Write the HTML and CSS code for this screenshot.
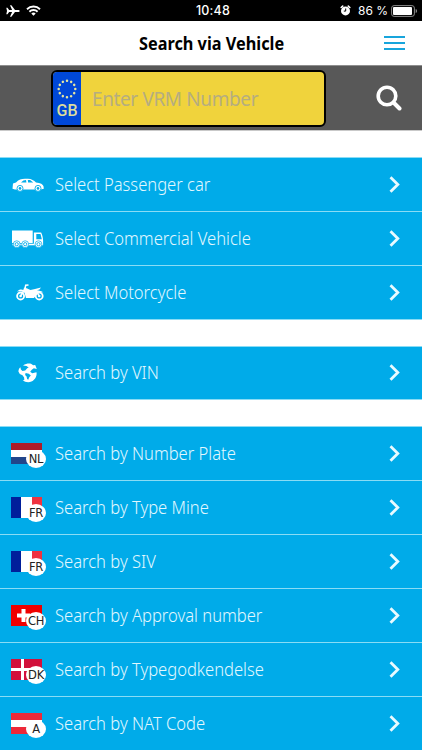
FILE: index.html
```html
<!DOCTYPE html>
<html lang="en">
<head>
  <meta charset="utf-8">
  <title>Search via Vehicle</title>
  <link rel="stylesheet" href="styles.css">
</head>
<body>

  <!-- Status bar -->
  <div class="status-bar">
    <div class="status-left">
      <svg width="14" height="12" viewBox="0 0 14 12"><path fill="#fff" d="M0.3 2.8h1.2l1.6 2.2h3L4 .3h1.4L9 5h3c1 0 1.7.4 1.7 1s-.7 1-1.7 1H9l-3.600 4.700H4L6.100 7h-3L1.500 9.200H.3L1 6z"/></svg>
      <svg width="15" height="11" viewBox="0 0 15 11"><g fill="none" stroke="#fff" stroke-width="1.9"><path d="M1 4.200a9.300 9.300 0 0 1 13 0"/><path d="M3.400 6.700a5.900 5.900 0 0 1 8.200 0"/></g><path fill="#fff" d="M7.500 10.800L5.300 8.500a3.200 3.200 0 0 1 4.400 0z"/></svg>
    </div>
    <span class="clock">10:48</span>
    <div class="status-right">
      <svg width="11" height="11" viewBox="0 0 11 11"><path stroke="#fff" stroke-width="1.600" stroke-linecap="round" d="M1.200 2.500l1.500-1.400M9.800 2.500L8.300 1.100"/><circle cx="5.500" cy="5.900" r="4.500" fill="#fff"/><path d="M5.700 3.500v2.600H3.800" fill="none" stroke="#000"/></svg>
      <span class="percent">86 %</span>
      <svg width="27" height="12" viewBox="0 0 27 12"><rect x=".6" y=".6" width="22.800" height="10.800" rx="2.500" fill="none" stroke="#8c8c8c"/><rect x="2" y="2" width="19" height="8" rx="1" fill="#fff"/><path fill="#8c8c8c" d="M24.700 4c1.800.5 1.800 3.500 0 4z"/></svg>
    </div>
  </div>

  <header class="header">
    <h1>Search via Vehicle</h1>
    <button class="menu-btn" aria-label="Menu"><span></span><span></span><span></span></button>
  </header>

  <!-- VRM search -->
  <div class="search-bar">
    <div class="plate">
      <div class="plate-country">
        <svg width="20" height="20" viewBox="0 0 20 20"><circle cx="10" cy="10" r="8.300" fill="none" stroke="#e5e6a0" stroke-width="2.500" stroke-linecap="round" pathLength="120" stroke-dasharray="0.1 9.9"/></svg>
        <span>GB</span>
      </div>
      <input type="text" placeholder="Enter VRM Number">
    </div>
    <svg class="search-icon" width="26" height="26" viewBox="0 0 26 26"><g fill="none" stroke="#fff" stroke-linecap="round"><circle cx="11" cy="11" r="8.800" stroke-width="3.600"/><path stroke-width="4" d="M18 18l5.500 5.500"/></g></svg>
  </div>

  <div class="group">
    <a class="row">
      <span class="icon"><svg width="33" height="14" viewBox="0 0 33 14"><path fill="#fff" d="M2 5.500L5 4.400C8 1.600 10 .8 14 .8h3c3.500 0 6 2 8 3.600 4.500.6 7 1.600 7.500 3.900l.3 2.400-3.200.8H4l-2.500-.8z"/><path fill="#00abe9" d="M10 4.600l2.400-2.200 2.600-.5.4 2.700zM16.800 1.900l2.300.2 3.200 2.500h-5.200z"/><g fill="#fff" stroke="#00abe9" stroke-width=".9"><circle cx="9" cy="10.400" r="3"/><circle cx="27" cy="10.400" r="3"/></g><g fill="#00abe9"><circle cx="9" cy="10.400" r="1.300"/><circle cx="27" cy="10.400" r="1.300"/></g></svg></span>
      <span class="label">Select Passenger car</span>
      <svg class="chevron" width="11" height="17" viewBox="0 0 11 17"><path d="M1.500 1.200l7.300 7.300-7.300 7.300"/></svg>
    </a>
    <a class="row">
      <span class="icon"><svg width="33" height="18" viewBox="0 0 33 18"><path fill="#fff" d="M1 .500h20.700v12.500H1zM22.900 2.500h7.200c1.200 2.300 1.900 5 2 8v4.700H22.900zM1.500 13.800h22v1.500h-22z"/><path fill="#00abe9" d="M25.300 4h4.200l1.300 5.200h-5.500z"/><g fill="#fff" stroke="#00abe9" stroke-width=".7"><circle cx="5.700" cy="14.200" r="3.400"/><circle cx="14.200" cy="14.200" r="3.400"/><circle cx="27.500" cy="14.200" r="3.400"/></g><g fill="none" stroke="#00abe9" stroke-width=".9"><circle cx="5.700" cy="14.200" r="1.600"/><circle cx="14.200" cy="14.200" r="1.600"/><circle cx="27.500" cy="14.200" r="1.600"/></g></svg></span>
      <span class="label">Select Commercial Vehicle</span>
      <svg class="chevron" width="11" height="17" viewBox="0 0 11 17"><path d="M1.500 1.200l7.300 7.300-7.300 7.300"/></svg>
    </a>
    <a class="row">
      <span class="icon moto"><svg width="28" height="17" viewBox="0 0 28 17"><g fill="none" stroke="#fff"><circle cx="4.600" cy="12" r="3.500" stroke-width="1.800"/><circle cx="23.200" cy="12" r="3.500" stroke-width="1.800"/><path stroke-width="1.500" d="M12.500 1L9.700 1.300 9 5l-4.400 7M19.500 6.200l3.700 5.800"/></g><path fill="#fff" d="M1 7.500c2-2.300 4.500-2.600 6.500-1.500L8 3.500c2.500.3 4 1.600 6.500 2.500l3.500-.8 7-1.700-1.500 2.100-2.500.7c2 .6 4.500.4 6.500 2.200-3-.8-5-.2-6.300 1.200L18 14h-8L8.500 8.700C6 7 3.500 7 1 7.500z"/><g fill="#fff"><circle cx="4.600" cy="12" r="1.300"/><circle cx="23.200" cy="12" r="1.300"/></g></svg></span>
      <span class="label">Select Motorcycle</span>
      <svg class="chevron" width="11" height="17" viewBox="0 0 11 17"><path d="M1.500 1.200l7.300 7.300-7.300 7.300"/></svg>
    </a>
  </div>

  <div class="group vin-group">
    <a class="row">
      <span class="icon"><svg width="20" height="20" viewBox="0 0 20 20"><path fill="#fff" d="M5 2.500C8 .5 11 .3 13 .8l2.200 1.400 2-.2L18.800 6l-3-.7-2 1.400-1.600 2 2 1.600 4.300-1.100c.7 4-1.700 7.900-5.100 9.400-3 1.200-6.500.5-8.700-1.300L6.300 17l-.2-2.500-1.600-2.300L1.800 11 .4 8.500c.1-1.900.8-3.300 2-4.300l.5 2.300L4.500 8l2.700-.5 2-2.200 1.500-.8L8.500 3z"/><path fill="#00abe9" d="M7.600 10l3.200.7 2 1.700-1.700 2-.8 2.400-1.200-.7-.5-2.600-1.500-1.500z"/></svg></span>
      <span class="label">Search by VIN</span>
      <svg class="chevron" width="11" height="17" viewBox="0 0 11 17"><path d="M1.500 1.200l7.300 7.300-7.300 7.300"/></svg>
    </a>
  </div>

  <div class="group">
    <a class="row">
      <span class="icon flag"><svg width="31" height="21" viewBox="0 0 31 21"><path fill="#ae1c28" d="M0 0h31v7H0z"/><path fill="#fff" d="M0 7h31v7H0z"/><path fill="#21468b" d="M0 14h31v7H0z"/></svg><span class="code">NL</span></span>
      <span class="label">Search by Number Plate</span>
      <svg class="chevron" width="11" height="17" viewBox="0 0 11 17"><path d="M1.500 1.200l7.300 7.300-7.300 7.300"/></svg>
    </a>
    <a class="row">
      <span class="icon flag"><svg width="31" height="21" viewBox="0 0 31 21"><path fill="#001f9b" d="M0 0h10v21H0z"/><path fill="#fff" d="M10 0h11v21H10z"/><path fill="#ef3340" d="M21 0h10v21H21z"/></svg><span class="code">FR</span></span>
      <span class="label">Search by Type Mine</span>
      <svg class="chevron" width="11" height="17" viewBox="0 0 11 17"><path d="M1.500 1.200l7.300 7.300-7.300 7.300"/></svg>
    </a>
    <a class="row">
      <span class="icon flag"><svg width="31" height="21" viewBox="0 0 31 21"><path fill="#001f9b" d="M0 0h10v21H0z"/><path fill="#fff" d="M10 0h11v21H10z"/><path fill="#ef3340" d="M21 0h10v21H21z"/></svg><span class="code">FR</span></span>
      <span class="label">Search by SIV</span>
      <svg class="chevron" width="11" height="17" viewBox="0 0 11 17"><path d="M1.500 1.200l7.300 7.300-7.300 7.300"/></svg>
    </a>
    <a class="row">
      <span class="icon flag"><svg width="31" height="21" viewBox="0 0 31 21"><path fill="#f00000" d="M0 0h31v21H0z"/><path fill="#fff" d="M10.500 4h4v4.500H19v4h-4.500V17h-4v-4.500H6v-4h4.500z"/></svg><span class="code">CH</span></span>
      <span class="label">Search by Approval number</span>
      <svg class="chevron" width="11" height="17" viewBox="0 0 11 17"><path d="M1.500 1.200l7.300 7.300-7.300 7.300"/></svg>
    </a>
    <a class="row">
      <span class="icon flag"><svg width="31" height="21" viewBox="0 0 31 21"><path fill="#d2103b" d="M0 0h31v21H0z"/><path fill="#fff" d="M10 0h3v21h-3zM0 9h31v3H0z"/></svg><span class="code">DK</span></span>
      <span class="label">Search by Typegodkendelse</span>
      <svg class="chevron" width="11" height="17" viewBox="0 0 11 17"><path d="M1.500 1.200l7.300 7.300-7.300 7.300"/></svg>
    </a>
    <a class="row">
      <span class="icon flag"><svg width="31" height="21" viewBox="0 0 31 21"><path fill="#ed2939" d="M0 0h31v21H0z"/><path fill="#fff" d="M0 7h31v7H0z"/></svg><span class="code">A</span></span>
      <span class="label">Search by NAT Code</span>
      <svg class="chevron" width="11" height="17" viewBox="0 0 11 17"><path d="M1.500 1.200l7.300 7.300-7.300 7.300"/></svg>
    </a>
  </div>

</body>
</html>
```
FILE: styles.css
```css
:root {
  --blue: #00abe9;
  --line: #8adcf5;
}

* {
  box-sizing: border-box;
}

body {
  margin: 0;
  height: 750px;
  overflow: hidden;
  background: #fff;
  font-family: "Noto Sans", "Open Sans", sans-serif;
}

svg {
  display: block;
  flex: none;
}

.status-bar {
  display: grid;
  grid-template-columns: 1fr auto 1fr;
  align-items: center;
  height: 21px;
  padding: 0 4px 0 6px;
  background: #000;
  color: #fff;
  font-family: Inter, sans-serif;
  font-size: 13px;
  line-height: 21px;
}

.status-left,
.status-right {
  display: flex;
  align-items: center;
}

.status-left {
  gap: 6px;
}

.status-right {
  justify-content: flex-end;
}

.clock {
  padding-left: 2px;
  font-weight: 500;
  font-size: 12.5px;
  letter-spacing: 0.2px;
}

.percent {
  margin: 0 3px 0 7px;
  font-size: 12px;
}

.header {
  display: grid;
  grid-template-columns: 1fr auto 1fr;
  align-items: center;
  height: 45px;
  padding: 0 17px;
  border-bottom: 1px solid #8e8e8e;
}

.header h1 {
  grid-column: 2;
  width: 145px;
  margin: 0;
  color: #000;
  font-size: 18.5px;
  line-height: 24px;
  white-space: nowrap;
  transform: scaleX(0.88);
  transform-origin: left;
}

.menu-btn {
  display: flex;
  flex-direction: column;
  justify-self: end;
  gap: 4px;
  width: 21px;
  padding: 0;
  border: 0;
  background: none;
}

.menu-btn span {
  height: 2px;
  background: #18a5dc;
}

.search-bar {
  display: flex;
  align-items: center;
  justify-content: space-between;
  height: 65px;
  padding: 0 20px 0 51px;
  border-bottom: 1px solid #c9c9c9;
  background: #585858;
}

.plate {
  display: flex;
  width: 275px;
  height: 57px;
  overflow: hidden;
  border: 2px solid #000;
  border-radius: 6px;
  background: #f0d33c;
}

.plate-country {
  display: flex;
  flex-direction: column;
  align-items: center;
  width: 28px;
  padding-top: 7px;
  background: #0048d8;
  color: #dcdd9d;
  font-family: Roboto, sans-serif;
  font-size: 16px;
  font-weight: 500;
  line-height: 23px;
}

.plate input {
  width: 240px;
  padding: 2px 0 0 11px;
  border: 0;
  outline: 0;
  background: none;
  font-family: "Noto Sans", sans-serif;
  font-size: 19px;
  letter-spacing: -0.38px;
}

.plate input::placeholder {
  color: #b5ad80;
}

.group {
  margin-top: 26px;
  border-bottom: 1px solid var(--line);
}

.row {
  display: flex;
  align-items: center;
  height: 54px;
  padding: 0 22px 0 11px;
  border-top: 1px solid var(--line);
  background: var(--blue);
  color: #e2f8ff;
}

.vin-group .row {
  height: 53px;
}

.icon {
  display: flex;
  justify-content: center;
  flex: none;
  width: 33px;
  margin-right: 11px;
}

.icon.moto {
  padding-left: 4px;
}

.icon.flag {
  position: relative;
  justify-content: flex-start;
}

/* slightly narrowed lettering */
.label {
  flex: 1;
  padding-bottom: 2px;
  font-size: 17.5px;
  font-weight: 350;
  line-height: 24px;
  white-space: nowrap;
  transform: scaleX(0.946);
  transform-origin: left;
}

.chevron {
  margin-top: -1px;
  fill: none;
  stroke: #e8faff;
  stroke-width: 2.8;
}

/* country code over the flag corner */
.code {
  position: absolute;
  top: 7px;
  left: 15px;
  width: 20px;
  height: 18px;
  border-radius: 50%;
  background: #fff;
  color: #222;
  font-family: "DejaVu Sans", sans-serif;
  font-size: 11.5px;
  line-height: 19px;
  letter-spacing: -0.3px;
  text-align: center;
}
```
